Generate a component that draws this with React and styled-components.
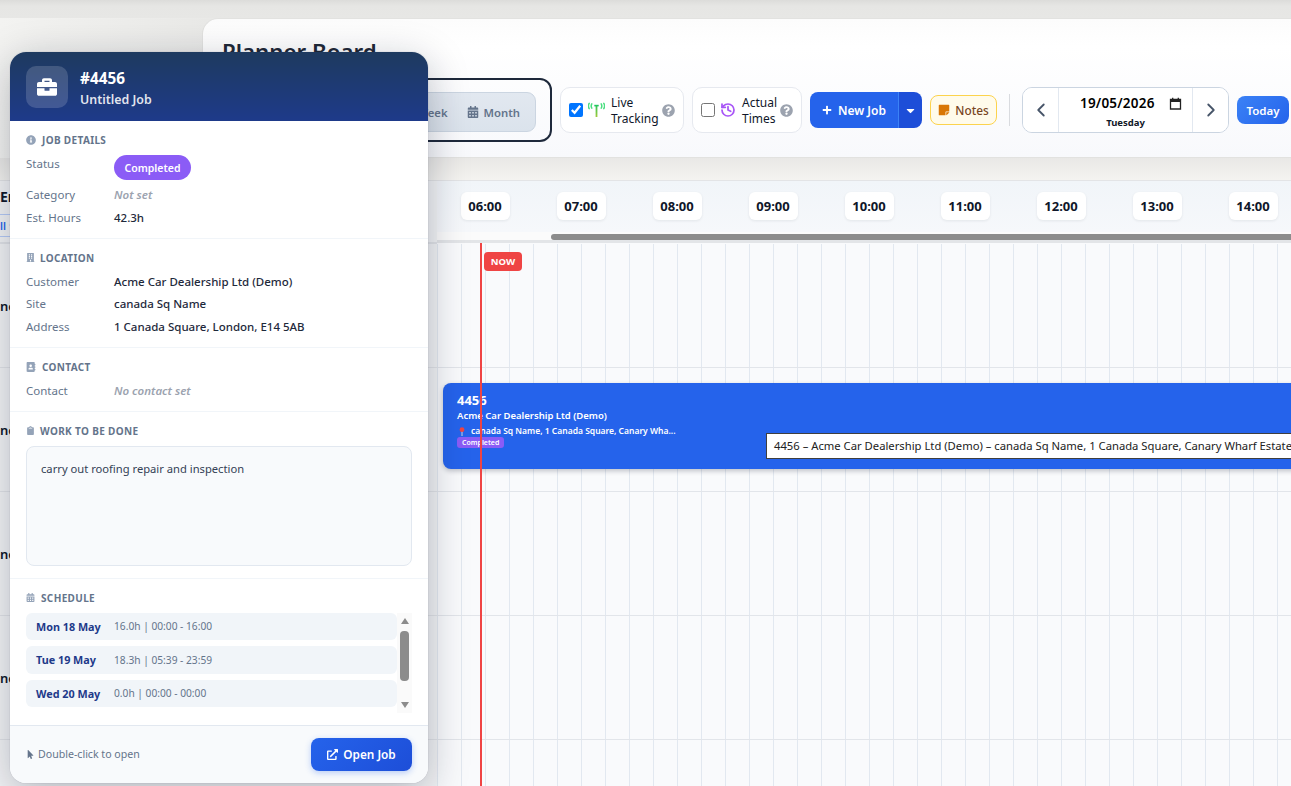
import React from "react";
import styled, { createGlobalStyle } from "styled-components";
import { ChevronLeft, ChevronRight, History } from "lucide-react";
import {
  FaBriefcase, FaInfoCircle, FaBuilding, FaAddressBook, FaClipboard, FaCalendarAlt,
  FaMousePointer, FaExternalLinkAlt, FaPlus, FaCaretDown, FaStickyNote, FaQuestionCircle,
} from "react-icons/fa";

const Global = createGlobalStyle`
  * { box-sizing: border-box; }
  html, body { margin: 0; padding: 0; width: 100%; height: 100%; overflow: hidden; }
  body { font-family: "Noto Sans", "Liberation Sans", sans-serif; color: #0f172a; background: #f1f0ee; }
`;

const Page = styled.div`
  position: relative;
  width: 1291px;
  height: 786px;
  overflow: hidden;
  display: flex;
  flex-direction: column;
  background: linear-gradient(90deg, #f3f3f1 0, #e9e9e7 210px, #e8e8e6 100%);
`;
const TopShade = styled.div`
  height: 18px;
  flex: none;
  background: linear-gradient(180deg, #dcdcda 0, #e6e6e4 6px, #e7e7e5 100%);
`;
const HeaderCard = styled.header`
  flex: none;
  height: 140px;
  margin-left: 202px;
  padding: 17px 0 16px 19px;
  border-radius: 16px 0 0 16px;
  border: 1px solid #e2e2e0;
  border-right: 0;
  background: linear-gradient(180deg, #fcfcfc 0, #ffffff 20%, #f8f9fc 100%);
  display: flex;
  flex-direction: column;
`;
const Title = styled.h1`
  margin: 0 0 10px;
  height: 32px;
  font-size: 22.3px;
  line-height: 32px;
  font-weight: 600;
  color: #1f2937;
`;
const Toolbar = styled.div`
  height: 64px;
  display: flex;
  align-items: center;
  gap: 8px;
`;
const ViewRing = styled.div`
  width: 330px;
  height: 64px;
  flex: none;
  border: 2px solid #1e293b;
  border-radius: 12px;
  display: flex;
  align-items: center;
  justify-content: flex-end;
  padding-right: 14px;
`;
const Segment = styled.div`
  height: 40px;
  margin-top: 4px;
  display: flex;
  align-items: center;
  gap: 5px;
  padding: 0 8px;
  border: 1px solid #cbd5e1;
  border-radius: 9px;
  background: linear-gradient(180deg, #e2e8f0, #dbe3ec);
`;
const SegItem = styled.span`
  display: inline-flex;
  align-items: center;
  gap: 5px;
  padding: 0 7px;
  font-size: 11.3px;
  font-weight: 600;
  color: #64748b;
`;
const ToggleCard = styled.label`
  width: ${(p) => p.$w}px;
  height: 46px;
  flex: none;
  display: flex;
  align-items: center;
  padding: 0 8px;
  background: #fff;
  border: 1px solid #e6e9ef;
  border-radius: 10px;
`;
const Check = styled.input`
  width: 14px;
  height: 14px;
  margin: 0 5px 0 0;
  flex: none;
`;
const ToggleText = styled.span`
  font-size: 12px;
  line-height: 16px;
  color: #0f172a;
  margin-left: 6px;
  padding-top: 1px;
  flex: 1;
`;
const HelpIcon = styled(FaQuestionCircle)`
  color: #9ca3af;
  width: 13px;
  height: 13px;
  flex: none;
`;
const SplitButton = styled.div`
  display: flex;
  height: 36px;
  flex: none;
  border-radius: 8px;
  overflow: hidden;
`;
const NewJob = styled.button`
  width: 88px;
  border: 0;
  padding: 0;
  color: #fff;
  background: #2563eb;
  font: 600 12px "Noto Sans", sans-serif;
  display: flex;
  align-items: center;
  justify-content: center;
  gap: 6px;
`;
const Caret = styled.button`
  width: 24px;
  border: 0;
  border-left: 1px solid #3b82f6;
  padding: 0;
  color: #fff;
  background: #1d4ed8;
  display: flex;
  align-items: center;
  justify-content: center;
`;
const Notes = styled.button`
  height: 30px;
  width: 67px;
  flex: none;
  padding: 0;
  display: flex;
  align-items: center;
  justify-content: center;
  gap: 5px;
  border: 1px solid #fcd34d;
  border-radius: 8px;
  background: #fffbeb;
  color: #78451f;
  font: 500 11.8px "Noto Sans", sans-serif;
  svg { color: #d97706; }
`;
const Separator = styled.div`
  width: 1px;
  height: 32px;
  flex: none;
  margin: 0 4px;
  background: #d9dbdf;
`;
const DateGroup = styled.div`
  width: 207px;
  height: 46px;
  flex: none;
  display: flex;
  border: 1px solid #cbd5e1;
  border-radius: 10px;
  background: #fff;
  overflow: hidden;
`;
const DateNav = styled.button`
  width: 35px;
  flex: none;
  border: 0;
  padding: 0;
  background: #fff;
  color: #475569;
  display: flex;
  align-items: center;
  justify-content: center;
`;
const DateCenter = styled.div`
  flex: 1;
  border-left: 1px solid #e2e8f0;
  border-right: 1px solid #e2e8f0;
  display: flex;
  flex-direction: column;
  align-items: center;
`;
const DateValue = styled.div`
  width: 100%;
  height: 28px;
  display: flex;
  align-items: center;
  padding: 2px 10px 0 21px;
  justify-content: space-between;
  font-size: 13.5px;
  font-weight: 600;
  letter-spacing: 0.2px;
  color: #000;
`;
const DateDay = styled.div`
  margin-top: 1px;
  font-size: 9.5px;
  line-height: 12px;
  font-weight: 700;
  color: #111827;
`;
const Today = styled.button`
  width: 52px;
  height: 28px;
  flex: none;
  border: 0;
  padding: 0;
  border-radius: 8px;
  color: #fff;
  background: linear-gradient(135deg, #3b82f6, #2563eb);
  font: 600 11.5px "Noto Sans", sans-serif;
`;
const Band = styled.div`
  height: 22px;
  flex: none;
  background: linear-gradient(180deg, #e9e8e6, #f4f3f0);
`;
const Board = styled.main`
  flex: none;
  display: flex;
  border-top: 1px solid #e3e4e6;
  height: 606px;
`;
const LeftCol = styled.aside`
  width: 437px;
  flex: none;
  background: #f3f4f6;
`;
const LeftHead = styled.div`
  height: 63px;
  border-bottom: 2px solid #e2e4e8;
  padding-top: 6px;
`;
const HeadName = styled.div`
  font-size: 14px;
  line-height: 20px;
  font-weight: 700;
  color: #0f172a;
`;
const FilterPill = styled.div`
  width: 60px;
  height: 23px;
  margin-top: 7px;
  border: 1px solid #b6cbf7;
  border-left: 0;
  display: flex;
  align-items: center;
  gap: 2px;
  font-size: 10.5px;
  font-weight: 600;
  color: #2563eb;
`;
const NameRow = styled.div`
  height: 124px;
  border-bottom: 1px solid #e2e4e8;
  display: flex;
  align-items: center;
  font-size: 13px;
  font-weight: 600;
  color: #0f172a;
`;
const Timeline = styled.section`
  flex: 1;
  min-width: 0;
  overflow: hidden;
  display: flex;
  flex-direction: column;
`;
const Hours = styled.div`
  height: 51px;
  flex: none;
  padding-bottom: 1px;
  display: flex;
  align-items: center;
  background: linear-gradient(180deg, #f1f5f9, #f6f8fb);
`;
const HourCell = styled.div`
  width: 96px;
  flex: none;
  display: flex;
  justify-content: center;
`;
const HourChip = styled.div`
  width: 49px;
  height: 28px;
  background: #fff;
  border-radius: 6px;
  box-shadow: 0 1px 3px rgba(15, 23, 42, 0.08);
  font-size: 13px;
  line-height: 28px;
  font-weight: 700;
  text-align: center;
  color: #0f172a;
`;
const ScrollTrack = styled.div`
  height: 11px;
  flex: none;
  padding: 2px 0 0 114px;
  background: #fbfbfb;
  border-bottom: 3px solid #e3e5e8;
`;
const ScrollThumb = styled.div`
  height: 6px;
  border-radius: 3px 0 0 3px;
  background: #8c8c8c;
`;
const Body = styled.div`
  position: relative;
  flex: 1;
  padding-top: 1px;
  overflow: hidden;
  background: #f9fafc;
`;
const GridRow = styled.div`
  position: relative;
  height: 124px;
  border-bottom: 1px solid #e2e5ea;
  background-color: #f9fafc;
  background-image: repeating-linear-gradient(90deg, #e2e8f0 0, #e2e8f0 1px, transparent 1px, transparent 24px);
`;
const JobBar = styled.article`
  position: absolute;
  left: 6px;
  top: 15px;
  width: 900px;
  height: 86px;
  padding: 10px 14px;
  border-radius: 8px;
  background: #2563eb;
  box-shadow: 0 2px 5px rgba(15, 23, 42, 0.25);
  color: #fff;
  display: flex;
  flex-direction: column;
  align-items: flex-start;
`;
const JobNo = styled.div`
  font-size: 13px;
  line-height: 14px;
  font-weight: 700;
`;
const JobCustomer = styled.div`
  margin-top: 2px;
  font-size: 9.5px;
  line-height: 14px;
  font-weight: 600;
`;
const JobSite = styled.div`
  margin-top: 1px;
  display: flex;
  align-items: center;
  gap: 6px;
  padding-left: 2px;
  font-size: 8.5px;
  line-height: 14px;
  font-weight: 600;
`;
const JobBadge = styled.span`
  margin-top: -1px;
  height: 11px;
  padding: 0 5px;
  border-radius: 3px;
  background: #8b5cf6;
  font-size: 7px;
  line-height: 11px;
  font-weight: 600;
`;
const NowLine = styled.div`
  position: absolute;
  left: 43px;
  top: 0;
  bottom: 0;
  width: 2px;
  background: #ef4444;
`;
const NowBadge = styled.div`
  position: absolute;
  left: 47px;
  top: 9px;
  width: 38px;
  height: 19px;
  border-radius: 4px;
  background: #ef4444;
  color: #fff;
  font-size: 9.5px;
  line-height: 19px;
  font-weight: 700;
  text-align: center;
`;
const Tooltip = styled.div`
  position: absolute;
  left: 329px;
  top: 190px;
  height: 26px;
  padding: 0 7px;
  background: #fff;
  border: 1px solid #3f3f3f;
  font-size: 11.25px;
  line-height: 24px;
  white-space: nowrap;
  color: #222;
`;
const Popup = styled.aside`
  position: absolute;
  left: 10px;
  top: 52px;
  width: 418px;
  height: 731px;
  background: #fff;
  border-radius: 16px;
  overflow: hidden;
  box-shadow: 0 10px 40px rgba(15, 23, 42, 0.28), 0 0 0 1px rgba(15, 23, 42, 0.04);
  display: flex;
  flex-direction: column;
`;
const PopupHead = styled.div`
  height: 69px;
  flex: none;
  padding: 14px 16px;
  display: flex;
  align-items: center;
  gap: 12px;
  background: linear-gradient(180deg, #1e3a5f, #1e3a8a);
  color: #fff;
`;
const IconBox = styled.div`
  width: 42px;
  height: 42px;
  border-radius: 10px;
  background: rgba(255, 255, 255, 0.16);
  display: flex;
  align-items: center;
  justify-content: center;
`;
const PopupNo = styled.div`
  margin-top: 3px;
  font-size: 15.3px;
  line-height: 20px;
  font-weight: 700;
`;
const PopupSub = styled.div`
  margin-top: 3px;
  font-size: 12.4px;
  line-height: 18px;
  font-weight: 600;
  color: rgba(255, 255, 255, 0.88);
`;
const Section = styled.section`
  flex: none;
  padding: 12px 16px ${(p) => p.$pb}px;
  border-bottom: ${(p) => (p.$last ? "0" : "1px solid #f1f5f9")};
`;
const SectionTitle = styled.h3`
  margin: 0 0 ${(p) => p.$mb || 6}px;
  height: 14px;
  display: flex;
  align-items: center;
  gap: ${(p) => p.$gap || 5}px;
  font-size: 10px;
  line-height: 14px;
  font-weight: 700;
  letter-spacing: 0.35px;
  text-transform: uppercase;
  color: #64748b;
  svg { color: #94a3b8; flex: none; }
`;
const InfoRow = styled.div`
  display: flex;
  align-items: flex-start;
  min-height: ${(p) => p.$h || 22.5}px;
  font-size: 11.5px;
  line-height: 22px;
`;
const InfoLabel = styled.span`
  width: 88px;
  flex: none;
  color: #64748b;
`;
const InfoValue = styled.span`
  color: ${(p) => (p.$muted ? "#9ca3af" : "#1e293b")};
  font-style: ${(p) => (p.$muted ? "italic" : "normal")};
  font-weight: ${(p) => (p.$muted ? 600 : 500)};
`;
const StatusPill = styled.span`
  margin-top: 2px;
  width: 77px;
  height: 25px;
  border-radius: 13px;
  background: #8b5cf6;
  color: #fff;
  font-size: 10.5px;
  line-height: 26px;
  font-weight: 600;
  text-align: center;
`;
const WorkBox = styled.div`
  height: 120px;
  padding: 12px 14px;
  border: 1px solid #e2e8f0;
  border-radius: 8px;
  background: #f8fafc;
  font-size: 11.2px;
  line-height: 20px;
  color: #334155;
`;
const ScheduleWrap = styled.div`
  height: 100px;
  display: flex;
`;
const ScheduleList = styled.div`
  width: 371px;
  flex: none;
  display: flex;
  flex-direction: column;
  gap: 6px;
`;
const ScheduleRow = styled.div`
  height: 27.5px;
  padding: 0 10px;
  display: flex;
  align-items: center;
  border-radius: 6px;
  background: #f1f5f9;
`;
const ScheduleDate = styled.span`
  width: 78px;
  flex: none;
  font-size: 10.8px;
  font-weight: 700;
  color: #1e3a8a;
`;
const ScheduleTime = styled.span`
  font-size: 10.2px;
  color: #64748b;
`;
const FakeScroll = styled.div`
  width: 15px;
  flex: none;
  background: #fafafa;
  display: flex;
  flex-direction: column;
  align-items: center;
  padding-top: 5px;
`;
const ArrowUp = styled.div`
  width: 0;
  height: 0;
  border: 4.5px solid transparent;
  border-top: 0;
  border-bottom: 6px solid #8c8c8c;
`;
const ArrowDown = styled.div`
  width: 0;
  height: 0;
  margin-top: 21px;
  border: 4.5px solid transparent;
  border-bottom: 0;
  border-top: 6px solid #8c8c8c;
`;
const ScrollKnob = styled.div`
  width: 9px;
  height: 50px;
  margin-top: 7px;
  border-radius: 4px;
  background: #8c8c8c;
`;
const Footer = styled.footer`
  flex: 1;
  padding: 0 16px;
  display: flex;
  align-items: center;
  justify-content: space-between;
  border-top: 1px solid #e2e8f0;
  background: #f8fafc;
`;
const Hint = styled.span`
  display: flex;
  align-items: center;
  gap: 3px;
  font-size: 10.6px;
  color: #64748b;
`;
const OpenJob = styled.button`
  width: 101px;
  height: 33px;
  padding: 0;
  border: 0;
  border-radius: 8px;
  display: flex;
  align-items: center;
  justify-content: center;
  gap: 5px;
  color: #fff;
  background: linear-gradient(135deg, #2563eb, #1d4ed8);
  box-shadow: 0 2px 6px rgba(37, 99, 235, 0.3);
  font: 600 11.8px "Noto Sans", sans-serif;
`;

const TrackingIcon = () => (
  <svg width="17" height="16" viewBox="0 0 17 16" fill="none" style={{ flex: "none" }}>
    <defs>
      <linearGradient id="mast" gradientUnits="userSpaceOnUse" x1="8.5" y1="2" x2="8.5" y2="15">
        <stop offset="0" stopColor="#22c55e" />
        <stop offset="1" stopColor="#a3c93a" />
      </linearGradient>
    </defs>
    <path d="M8.5 3v12" stroke="url(#mast)" strokeWidth="1.8" />
    <path d="M6.3 3.6h4.4" stroke="#22c55e" strokeWidth="1.6" />
    <path d="M1.2 1.4C.2 3 .2 5 1.2 6.6M3.8 1.8C3.1 3 3.1 5 3.8 6.2M15.8 1.4c1 1.6 1 3.6 0 5.2M13.2 1.8c.7 1.2.7 3.2 0 4.4" stroke="#4ade80" strokeWidth="1.5" strokeLinecap="round" />
  </svg>
);
const NativeCalendar = () => (
  <svg width="13" height="13" viewBox="0 0 13 13" fill="none">
    <path d="M1.5 2.5h10v9.5h-10z" stroke="#222" strokeWidth="1.3" />
    <path d="M1.5 2.7h10v2.4h-10z" fill="#222" />
    <path d="M3.7 .8v2M9.3 .8v2" stroke="#222" strokeWidth="1.3" />
  </svg>
);
const PinIcon = () => (
  <svg width="6" height="9" viewBox="0 0 6 9">
    <path d="M3 4v5" stroke="#cbd5e1" strokeWidth="1" />
    <circle cx="3" cy="2.7" r="2.4" fill="#ef4444" />
  </svg>
);

const hours = ["06:00", "07:00", "08:00", "09:00", "10:00", "11:00", "12:00", "13:00", "14:00"];
const schedule = [
  ["Mon 18 May", "16.0h | 00:00 - 16:00"],
  ["Tue 19 May", "18.3h | 05:39 - 23:59"],
  ["Wed 20 May", "0.0h | 00:00 - 00:00"],
];

export default function App() {
  return (
    <Page>
      <Global />
      <TopShade />
      <HeaderCard>
        <Title>Planner Board</Title>
        <Toolbar>
          <ViewRing>
            <Segment>
              <SegItem>Week</SegItem>
              <SegItem><FaCalendarAlt size={12} />Month</SegItem>
            </Segment>
          </ViewRing>
          <ToggleCard $w={124}>
            <Check type="checkbox" defaultChecked />
            <TrackingIcon />
            <ToggleText>Live Tracking</ToggleText>
            <HelpIcon />
          </ToggleCard>
          <ToggleCard $w={110}>
            <Check type="checkbox" />
            <History size={16} color="#a855f7" strokeWidth={2.6} style={{ flex: "none" }} />
            <ToggleText>Actual Times</ToggleText>
            <HelpIcon />
          </ToggleCard>
          <SplitButton>
            <NewJob><FaPlus size={10} />New Job</NewJob>
            <Caret><FaCaretDown size={13} /></Caret>
          </SplitButton>
          <Notes><FaStickyNote size={12} />Notes</Notes>
          <Separator />
          <DateGroup>
            <DateNav><ChevronLeft size={22} strokeWidth={2} /></DateNav>
            <DateCenter>
              <DateValue>19/05/2026<NativeCalendar /></DateValue>
              <DateDay>Tuesday</DateDay>
            </DateCenter>
            <DateNav><ChevronRight size={22} strokeWidth={2} /></DateNav>
          </DateGroup>
          <Today>Today</Today>
        </Toolbar>
      </HeaderCard>
      <Band />

      <Board>
        <LeftCol>
          <LeftHead>
            <HeadName>Er</HeadName>
            <FilterPill>ll<FaCaretDown size={7} /></FilterPill>
          </LeftHead>
          <NameRow>nc</NameRow>
          <NameRow>nc</NameRow>
          <NameRow>nc</NameRow>
          <NameRow>nc</NameRow>
        </LeftCol>
        <Timeline>
          <Hours>
            {hours.map((h) => (
              <HourCell key={h}><HourChip>{h}</HourChip></HourCell>
            ))}
          </Hours>
          <ScrollTrack><ScrollThumb /></ScrollTrack>
          <Body>
            <GridRow />
            <GridRow>
              <JobBar>
                <JobNo>4456</JobNo>
                <JobCustomer>Acme Car Dealership Ltd (Demo)</JobCustomer>
                <JobSite><PinIcon />canada Sq Name, 1 Canada Square, Canary Wha...</JobSite>
                <JobBadge>Completed</JobBadge>
              </JobBar>
            </GridRow>
            <GridRow />
            <GridRow />
            <GridRow />
            <NowLine />
            <NowBadge>NOW</NowBadge>
            <Tooltip>4456 – Acme Car Dealership Ltd (Demo) – canada Sq Name, 1 Canada Square, Canary Wharf Estate, London, E14 5AB</Tooltip>
          </Body>
        </Timeline>
      </Board>

      <Popup>
        <PopupHead>
          <IconBox><FaBriefcase size={20} color="#fff" /></IconBox>
          <div>
            <PopupNo>#4456</PopupNo>
            <PopupSub>Untitled Job</PopupSub>
          </div>
        </PopupHead>
        <Section $pb={8.5}>
          <SectionTitle $gap={6}><FaInfoCircle size={10} />Job Details</SectionTitle>
          <InfoRow $h={31}><InfoLabel>Status</InfoLabel><StatusPill>Completed</StatusPill></InfoRow>
          <InfoRow><InfoLabel>Category</InfoLabel><InfoValue $muted>Not set</InfoValue></InfoRow>
          <InfoRow><InfoLabel>Est. Hours</InfoLabel><InfoValue>42.3h</InfoValue></InfoRow>
        </Section>
        <Section $pb={8.5}>
          <SectionTitle><FaBuilding size={9} />Location</SectionTitle>
          <InfoRow><InfoLabel>Customer</InfoLabel><InfoValue>Acme Car Dealership Ltd (Demo)</InfoValue></InfoRow>
          <InfoRow><InfoLabel>Site</InfoLabel><InfoValue>canada Sq Name</InfoValue></InfoRow>
          <InfoRow><InfoLabel>Address</InfoLabel><InfoValue>1 Canada Square, London, E14 5AB</InfoValue></InfoRow>
        </Section>
        <Section $pb={9}>
          <SectionTitle $gap={6}><FaAddressBook size={10} />Contact</SectionTitle>
          <InfoRow $h={22}><InfoLabel>Contact</InfoLabel><InfoValue $muted>No contact set</InfoValue></InfoRow>
        </Section>
        <Section $pb={12}>
          <SectionTitle $mb={8}><FaClipboard size={9} />Work to be done</SectionTitle>
          <WorkBox>carry out roofing repair and inspection</WorkBox>
        </Section>
        <Section $pb={12} $last>
          <SectionTitle $mb={8} $gap={6}><FaCalendarAlt size={9} />Schedule</SectionTitle>
          <ScheduleWrap>
            <ScheduleList>
              {schedule.map(([d, t]) => (
                <ScheduleRow key={d}>
                  <ScheduleDate>{d}</ScheduleDate>
                  <ScheduleTime>{t}</ScheduleTime>
                </ScheduleRow>
              ))}
            </ScheduleList>
            <FakeScroll>
              <ArrowUp />
              <ScrollKnob />
              <ArrowDown />
            </FakeScroll>
          </ScheduleWrap>
        </Section>
        <Footer>
          <Hint><FaMousePointer size={9} />Double-click to open</Hint>
          <OpenJob><FaExternalLinkAlt size={11} />Open Job</OpenJob>
        </Footer>
      </Popup>
    </Page>
  );
}
